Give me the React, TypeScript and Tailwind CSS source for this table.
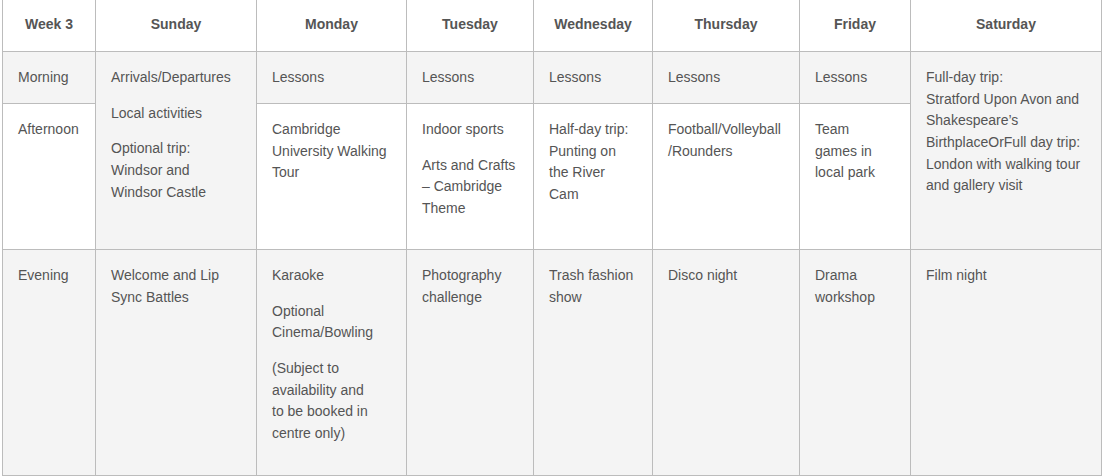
import React from "react";

const G = "bg-[#f4f4f4]";
const W = "bg-white";

function Para({ paras }: { paras: string[][] }) {
  return (
    <div className="flex flex-col gap-[14px]">
      {paras.map((p, i) => (
        <p key={i} className="m-0">
          {p.map((l, j) => (
            <React.Fragment key={j}>
              {j > 0 && <br />}
              {l}
            </React.Fragment>
          ))}
        </p>
      ))}
    </div>
  );
}

export default function App() {
  const headers = ["Week 3", "Sunday", "Monday", "Tuesday", "Wednesday", "Thursday", "Friday", "Saturday"];
  const cellBase = "border-r border-b border-[#bcbcbc] pl-[15px] pr-[11px] pt-[15px]";
  return (
    <div className="bg-white w-[1106px] h-[476px] overflow-hidden">
      <div
        className="ml-[2px] grid border-l border-[#bcbcbc] text-[14px] leading-[1.55] text-[#555555]"
        style={{ fontFamily: '"Liberation Sans", Arial, sans-serif' }}
      >
        <div className="grid grid-cols-[93px_161px_150px_127px_119px_147px_111px_191px] grid-rows-[52px_52px_146px_226px]">
          {headers.map((h) => (
            <div
              key={h}
              className="border-r border-b border-[#bcbcbc] bg-white flex items-start justify-center pt-[14px] font-bold"
            >
              {h}
            </div>
          ))}
          {/* Morning row */}
          <div className={`${cellBase} ${G}`}>Morning</div>
          <div className={`${cellBase} ${G} row-span-2`}>
            <Para paras={[["Arrivals/Departures"], ["Local activities"], ["Optional trip:", "Windsor and", "Windsor Castle"]]} />
          </div>
          <div className={`${cellBase} ${G}`}>Lessons</div>
          <div className={`${cellBase} ${G}`}>Lessons</div>
          <div className={`${cellBase} ${G}`}>Lessons</div>
          <div className={`${cellBase} ${G}`}>Lessons</div>
          <div className={`${cellBase} ${G}`}>Lessons</div>
          <div className={`${cellBase} ${G} row-span-2`}>
            <Para
              paras={[
                [
                  "Full-day trip:",
                  "Stratford Upon Avon and",
                  "Shakespeare’s",
                  "BirthplaceOrFull day trip:",
                  "London with walking tour",
                  "and gallery visit",
                ],
              ]}
            />
          </div>
          {/* Afternoon row */}
          <div className={`${cellBase} ${W}`}>Afternoon</div>
          <div className={`${cellBase} ${W}`}>
            <Para paras={[["Cambridge", "University Walking", "Tour"]]} />
          </div>
          <div className={`${cellBase} ${W}`}>
            <Para paras={[["Indoor sports"], ["Arts and Crafts", "– Cambridge", "Theme"]]} />
          </div>
          <div className={`${cellBase} ${W}`}>
            <Para paras={[["Half-day trip:", "Punting on", "the River", "Cam"]]} />
          </div>
          <div className={`${cellBase} ${W}`}>
            <Para paras={[["Football/Volleyball", "/Rounders"]]} />
          </div>
          <div className={`${cellBase} ${W}`}>
            <Para paras={[["Team", "games in", "local park"]]} />
          </div>
          {/* Evening row */}
          <div className={`${cellBase} ${G}`}>Evening</div>
          <div className={`${cellBase} ${G}`}>
            <Para paras={[["Welcome and Lip", "Sync Battles"]]} />
          </div>
          <div className={`${cellBase} ${G}`}>
            <Para
              paras={[
                ["Karaoke"],
                ["Optional", "Cinema/Bowling"],
                ["(Subject to", "availability and", "to be booked in", "centre only)"],
              ]}
            />
          </div>
          <div className={`${cellBase} ${G}`}>
            <Para paras={[["Photography", "challenge"]]} />
          </div>
          <div className={`${cellBase} ${G}`}>
            <Para paras={[["Trash fashion", "show"]]} />
          </div>
          <div className={`${cellBase} ${G}`}>Disco night</div>
          <div className={`${cellBase} ${G}`}>
            <Para paras={[["Drama", "workshop"]]} />
          </div>
          <div className={`${cellBase} ${G}`}>Film night</div>
        </div>
      </div>
    </div>
  );
}
